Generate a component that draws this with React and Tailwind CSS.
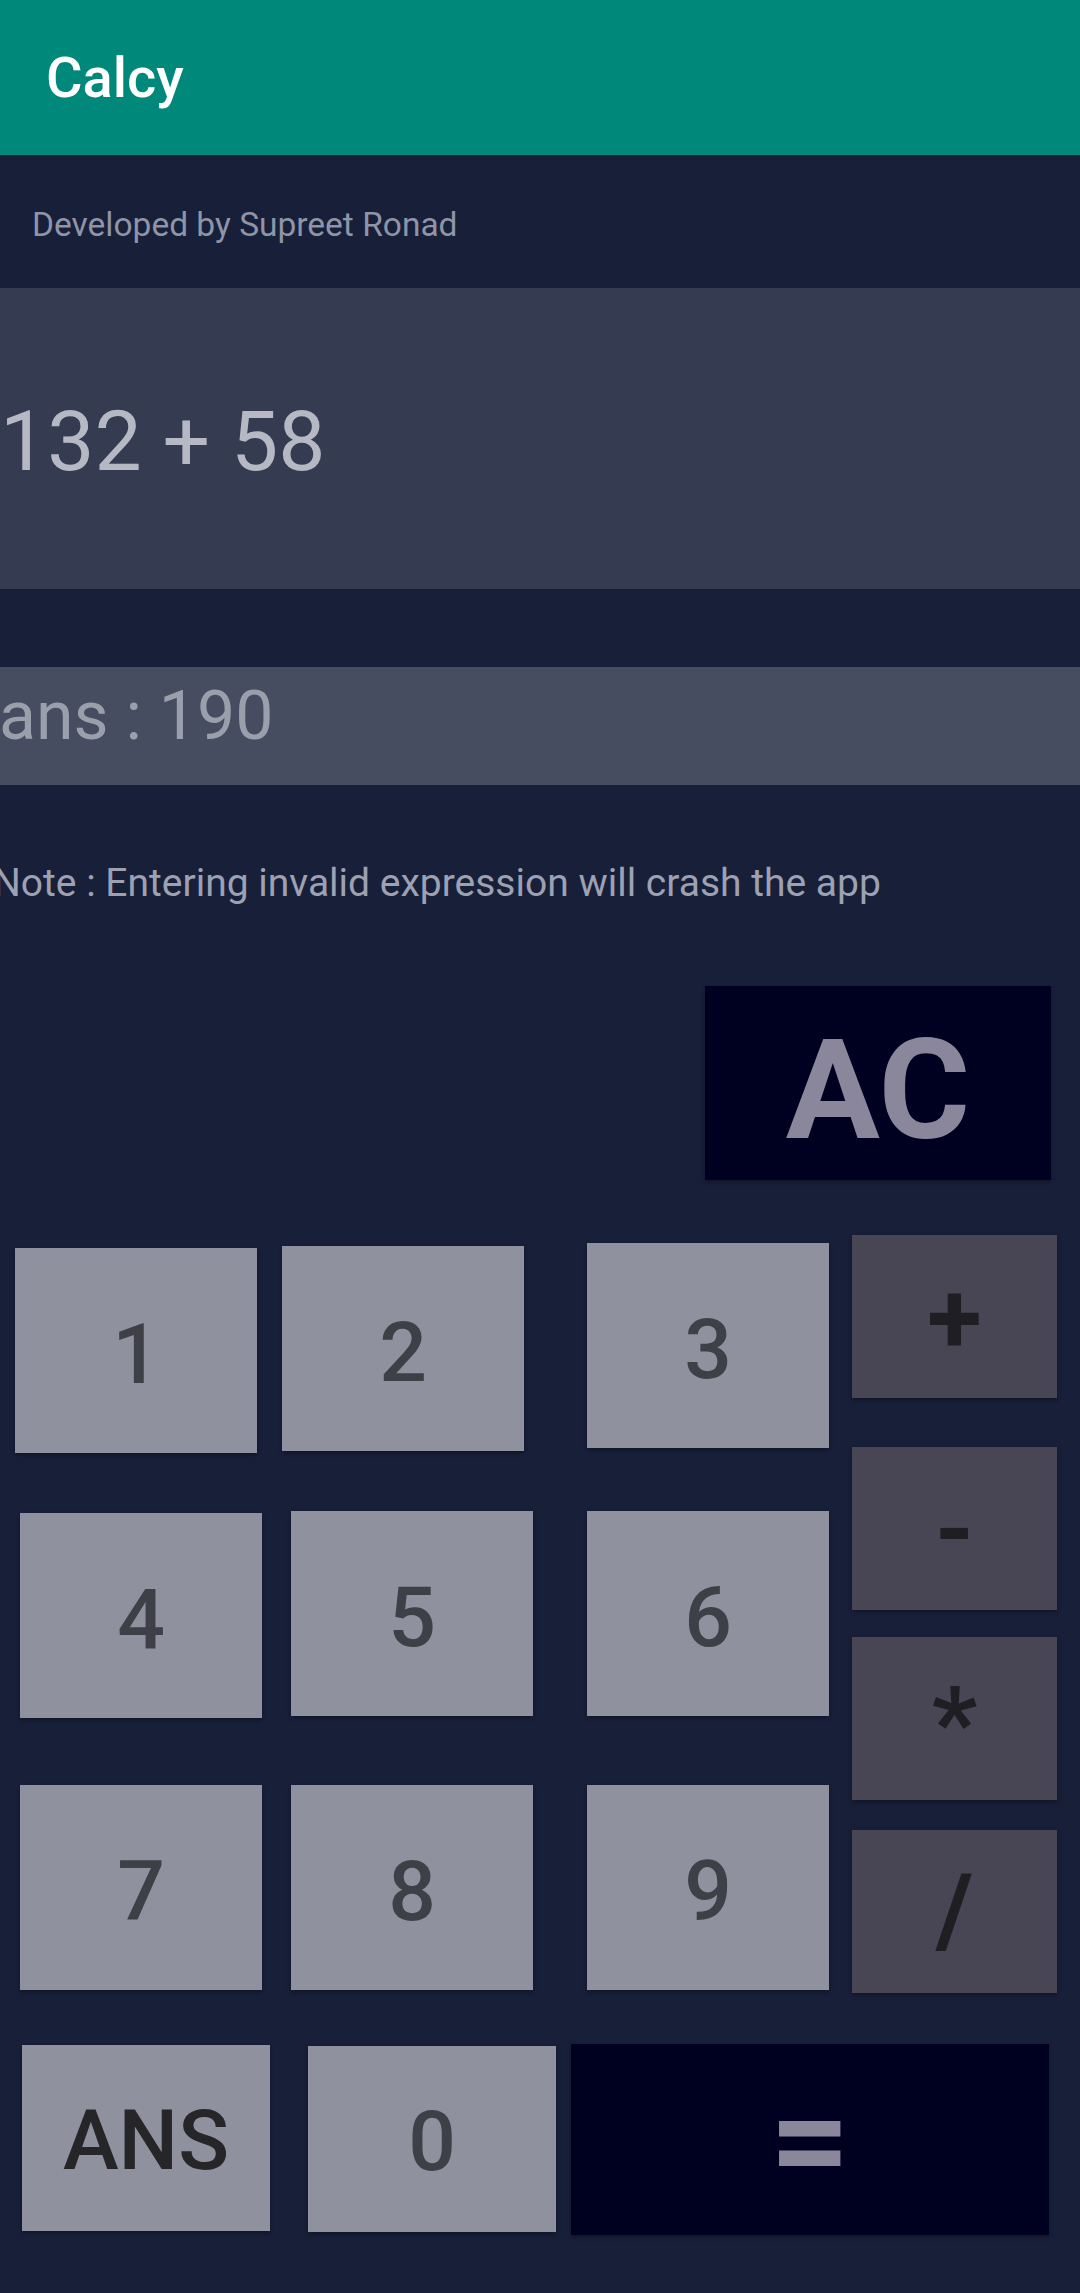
import React from "react";

function Key({ label, className }) {
    return (
        <div
            className={
                "flex items-center justify-center shrink-0 shadow-[0_2px_4px_rgba(0,0,0,0.35)] " +
                className
            }
        >
            {label}
        </div>
    );
}

export default function App() {
    const digit = "bg-[#8f929e] text-[#3f4047] text-[84px] font-medium leading-none pt-[8px] w-[242px]";
    const op = "bg-[#484654] text-[#1f1e23] text-[100px] font-bold leading-none w-[205px] h-[163px]";

    return (
        <div className="min-h-screen bg-[#181f39] font-['Roboto',sans-serif] overflow-hidden">
            {/* App bar */}
            <div className="h-[155px] bg-[#00897b] flex items-center pl-[46px]">
                <span className="text-white text-[56px] font-medium leading-none">Calcy</span>
            </div>

            {/* Credit line */}
            <div className="h-[133px] pt-[53px] pl-[32px]">
                <p className="text-[33.5px] leading-none text-[#8f94a6]">Developed by Supreet Ronad</p>
            </div>

            {/* Expression */}
            <div className="h-[301px] bg-[#353c51] flex items-center pt-[7px]">
                <span className="ml-[0px] text-[84px] leading-none text-[#b6b9c4]">132 + 58</span>
            </div>

            {/* Answer */}
            <div className="mt-[78px] h-[118px] bg-[#474d60] pt-[15px]">
                <p className="ml-[-1px] text-[68px] leading-none text-[#9a9fac]">ans : 190</p>
            </div>

            {/* Warning */}
            <p className="mt-[79px] ml-[-7px] text-[39px] leading-none text-[#9da1b1] whitespace-nowrap">
                Note : Entering invalid expression will crash the app
            </p>

            {/* Clear */}
            <div className="mt-[83px] flex justify-end pr-[29px]">
                <Key
                    label="AC"
                    className="w-[346px] h-[194px] bg-[#000021] text-[#8a879d] text-[140px] font-bold leading-none pt-[14px]"
                />
            </div>

            {/* Keypad */}
            <div className="mt-[55px] flex items-start">
                <div className="w-[829px] pt-[8px] flex flex-col">
                    <div className="flex items-start h-[210px]">
                        <Key label="1" className={digit + " ml-[15px] mt-[5px] h-[205px]"} />
                        <Key label="2" className={digit + " ml-[25px] mt-[3px] h-[205px]"} />
                        <Key label="3" className={digit + " ml-[63px] h-[205px]"} />
                    </div>
                    <div className="mt-[58px] flex items-start h-[207px]">
                        <Key label="4" className={digit + " ml-[20px] mt-[2px] h-[205px]"} />
                        <Key label="5" className={digit + " ml-[29px] h-[205px]"} />
                        <Key label="6" className={digit + " ml-[54px] h-[205px]"} />
                    </div>
                    <div className="mt-[67px] flex items-start h-[205px]">
                        <Key label="7" className={digit + " ml-[20px] h-[205px]"} />
                        <Key label="8" className={digit + " ml-[29px] h-[205px]"} />
                        <Key label="9" className={digit + " ml-[54px] h-[205px]"} />
                    </div>
                </div>
                <div className="ml-[23px] flex flex-col">
                    <Key label="+" className={op + " pt-[2px]"} />
                    <Key label="-" className={op + " mt-[49px] pt-[2px]"} />
                    <Key label="*" className={op + " mt-[27px] pt-[9px]"} />
                    <Key label="/" className={op + " mt-[30px] pb-[2px]"} />
                </div>
            </div>

            {/* Bottom row */}
            <div className="mt-[51px] flex items-start">
                <Key
                    label="ANS"
                    className="ml-[22px] mt-[1px] w-[248px] h-[186px] bg-[#8f929e] text-[#262629] text-[84px] font-medium leading-none pt-[6px]"
                />
                <Key
                    label="0"
                    className="ml-[38px] mt-[2px] w-[248px] h-[186px] bg-[#8f929e] text-[#3f4047] text-[84px] font-medium leading-none pt-[6px]"
                />
                <Key
                    label="="
                    className="ml-[15px] w-[478px] h-[191px] bg-[#000021] text-[#8a879d] text-[140px] font-bold leading-none"
                />
            </div>
        </div>
    );
}
